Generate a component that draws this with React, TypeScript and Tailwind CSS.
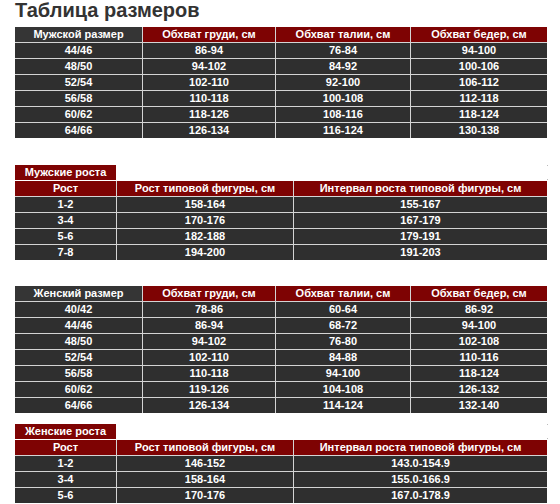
import React from "react";

type Table = {
  cols: string;
  head: string[];
  firstHeadDark?: boolean;
  rows: string[][];
};

const menSizes: Table = {
  cols: "grid-cols-[127px_132px_134px_136px]",
  head: ["Мужской размер", "Обхват груди, см", "Обхват талии, см", "Обхват бедер, см"],
  firstHeadDark: true,
  rows: [
    ["44/46", "86-94", "76-84", "94-100"],
    ["48/50", "94-102", "84-92", "100-106"],
    ["52/54", "102-110", "92-100", "106-112"],
    ["56/58", "110-118", "100-108", "112-118"],
    ["60/62", "118-126", "108-116", "118-124"],
    ["64/66", "126-134", "116-124", "130-138"],
  ],
};

const menHeights: Table = {
  cols: "grid-cols-[101px_176px_253px]",
  head: ["Рост", "Рост типовой фигуры, см", "Интервал роста типовой фигуры, см"],
  rows: [
    ["1-2", "158-164", "155-167"],
    ["3-4", "170-176", "167-179"],
    ["5-6", "182-188", "179-191"],
    ["7-8", "194-200", "191-203"],
  ],
};

const womenSizes: Table = {
  cols: "grid-cols-[127px_132px_134px_136px]",
  head: ["Женский размер", "Обхват груди, см", "Обхват талии, см", "Обхват бедер, см"],
  firstHeadDark: true,
  rows: [
    ["40/42", "78-86", "60-64", "86-92"],
    ["44/46", "86-94", "68-72", "94-100"],
    ["48/50", "94-102", "76-80", "102-108"],
    ["52/54", "102-110", "84-88", "110-116"],
    ["56/58", "110-118", "94-100", "118-124"],
    ["60/62", "119-126", "104-108", "126-132"],
    ["64/66", "126-134", "114-124", "132-140"],
  ],
};

const womenHeights: Table = {
  cols: "grid-cols-[101px_176px_253px]",
  head: ["Рост", "Рост типовой фигуры, см", "Интервал роста типовой фигуры, см"],
  rows: [
    ["1-2", "146-152", "143.0-154.9"],
    ["3-4", "158-164", "155.0-166.9"],
    ["5-6", "170-176", "167.0-178.9"],
  ],
};

const Cell = ({ children, className }: { children: React.ReactNode; className: string }) => (
  <div className={`h-[15px] flex items-center justify-center text-[11px] leading-none font-bold text-white ${className}`}>
    {children}
  </div>
);

const SizeTable = ({ t }: { t: Table }) => (
  <div className={`grid ${t.cols} gap-px bg-[#d4d4d4] w-[532px]`}>
    {t.head.map((h, i) => (
      <Cell key={h} className={i === 0 && t.firstHeadDark ? "bg-[#353535]" : "bg-[#7e0303]"}>
        {h}
      </Cell>
    ))}
    {t.rows.map((r) =>
      r.map((c, i) => (
        <Cell key={r[0] + i} className="bg-[#2f2f2f]">
          {c}
        </Cell>
      ))
    )}
  </div>
);

const Label = ({ text }: { text: string }) => (
  <div className="flex w-[533px] items-start justify-between">
    <div className="w-[101px] h-[15px] mb-px bg-[#7e0303] text-white font-bold text-[11px] leading-none flex items-center justify-center">
      {text}
    </div>
    <div className="w-px h-[15px] flex flex-col justify-between">
      <div className="w-px h-px bg-[#bbbbbb]" />
      <div className="w-px h-px bg-[#bbbbbb]" />
    </div>
  </div>
);

export default function App() {
  return (
    <div
      className="bg-white w-[560px] h-[504px] overflow-hidden pl-[15px]"
      style={{ fontFamily: '"Liberation Sans", Arial, sans-serif' }}
    >
      <h1 className="text-[20px] leading-[23px] font-bold text-[#333333] -mt-px h-[26px]">
        Таблица размеров
      </h1>
      <div className="mt-[2px]">
        <SizeTable t={menSizes} />
      </div>
      <div className="mt-[27px]">
        <Label text="Мужские роста" />
        <SizeTable t={menHeights} />
      </div>
      <div className="mt-[26px]">
        <SizeTable t={womenSizes} />
      </div>
      <div className="mt-[11px]">
        <Label text="Женские роста" />
        <SizeTable t={womenHeights} />
      </div>
    </div>
  );
}
